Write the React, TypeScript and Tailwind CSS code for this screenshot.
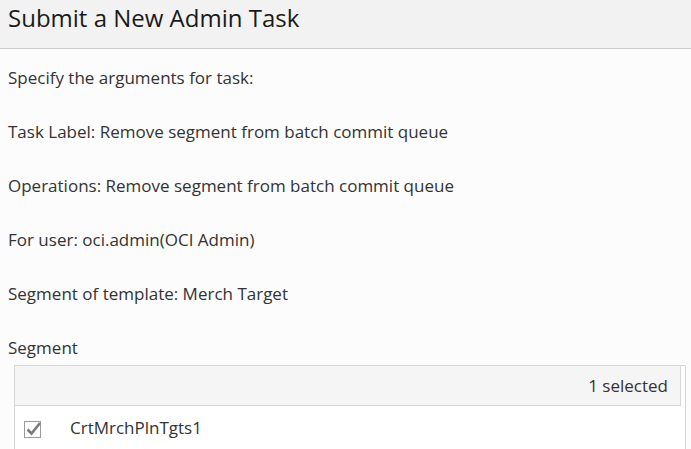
export default function App() {
  const lines = [
    'Specify the arguments for task:',
    'Task Label: Remove segment from batch commit queue',
    'Operations: Remove segment from batch commit queue',
    'For user: oci.admin(OCI Admin)',
    'Segment of template: Merch Target',
  ];

  return (
    <div className="h-[449px] w-[691px] overflow-hidden bg-[#fcfcfc] text-[#333333] font-['Open_Sans',sans-serif]">
      <div className="h-[49px] border-b border-[#cccccc] bg-[#f2f2f2] px-2 pt-[1px]">
        <h1 className="text-[24px] leading-[33px] text-[#1a1a1a]">Submit a New Admin Task</h1>
      </div>

      <div className="px-2 pt-[17px]">
        {lines.map((line) => (
          <p key={line} className="mb-[31px] text-[17px] leading-[23px]">{line}</p>
        ))}
        <p className="text-[17px] leading-[23px]">Segment</p>
      </div>

      <div className="ml-[14px] mr-[5px] mt-[6px] border border-[#d6d6d6] bg-white">
        <div className="mr-[4px] flex h-[40px] items-center justify-end border-b border-r border-[#d6d6d6] bg-[#f5f5f5] pr-[12px]">
          <span className="text-[17px] text-[#333333]">1 selected</span>
        </div>
        <div className="flex h-[44px] items-center px-[9px]">
          <svg width="19" height="19" viewBox="0 0 19 19">
            <rect x="0.5" y="2.5" width="16" height="16" fill="#ffffff" stroke="#9a9a9a" strokeWidth="1" />
            <path d="M3.5 10.5 L7.5 14.5 L16 4" fill="none" stroke="#7a7a7a" strokeWidth="2.6" strokeLinejoin="miter" />
          </svg>
          <span className="ml-[27px] text-[17px]">CrtMrchPlnTgts1</span>
        </div>
      </div>
    </div>
  );
}
